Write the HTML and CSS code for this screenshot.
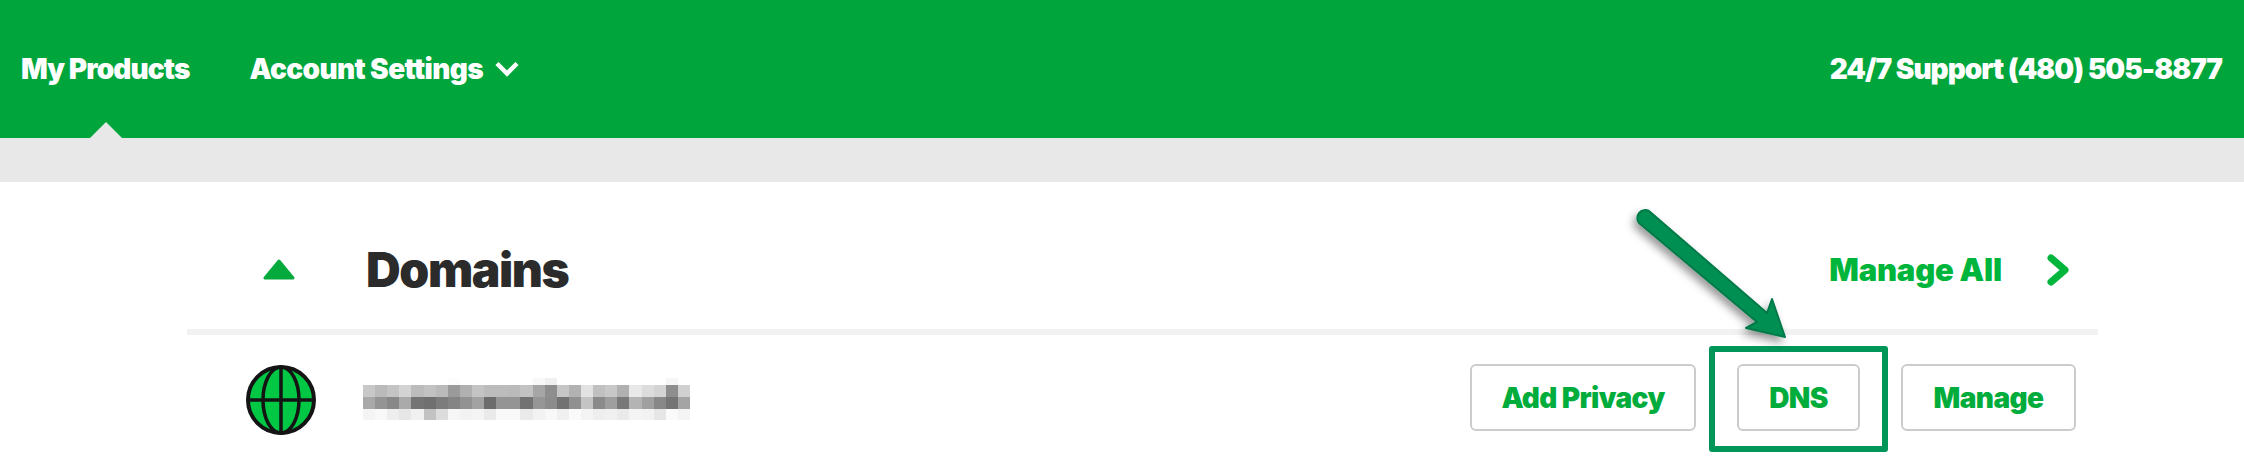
FILE: index.html
```html
<!DOCTYPE html>
<html>
<head>
    <link rel="stylesheet" href="styles.css">
    <title>My Products</title>
</head>
<body>
    <header class="top-bar">
        <nav class="top-nav">
            <a class="nav-link nav-active">My Products</a>
            <a class="nav-link nav-account">
                Account Settings
                <svg class="nav-chevron" width="24" height="16" viewBox="0 0 24 16"><path d="M2 2.5l10 10 10-10" fill="none" stroke="#fff" stroke-width="4.5"/></svg>
            </a>
        </nav>
        <div class="support">24/7 Support (480) 505-8877</div>
    </header>
    <div class="sub-band"></div>

    <section class="products">
        <div class="section-head">
            <svg class="collapse-icon" width="32" height="21" viewBox="0 0 32 21"><path d="M16 2L2 19h28z" fill="#05a93c" stroke="#05a93c" stroke-width="3" stroke-linejoin="round"/></svg>
            <h1 class="section-title">Domains</h1>
            <a class="manage-all">Manage All</a>
            <svg class="manage-chevron" width="23" height="32" viewBox="0 0 23 32"><path d="M4 4l14 12L4 28" fill="none" stroke="#00b53c" stroke-width="7" stroke-linecap="round" stroke-linejoin="round"/></svg>
        </div>

        <div class="domain-row">
            <svg class="globe" width="70" height="70" viewBox="0 0 70 70">
                <circle cx="35" cy="35" r="33" fill="#00c845" stroke="#141414" stroke-width="4"/>
                <ellipse cx="35" cy="35" rx="18" ry="33" fill="none" stroke="#141414" stroke-width="3.5"/>
                <path d="M35 2v66M2 35h66" stroke="#141414" stroke-width="3.5"/>
            </svg>

            <svg class="domain-blur" width="327" height="42" viewBox="0 0 27 42" preserveAspectRatio="none" shape-rendering="crispEdges">
                <rect x="7" y="0" width="1" height="7" fill="#fcfcfc"/>
                <rect x="14" y="0" width="1" height="7" fill="#f8f8f8"/>
                <rect x="15" y="0" width="1" height="7" fill="#f0f0f0"/>
                <rect x="25" y="0" width="1" height="7" fill="#f6f6f6"/>

                <rect x="0" y="7" width="1" height="12" fill="#c8c8c8"/>
                <rect x="1" y="7" width="1" height="12" fill="#bababa"/>
                <rect x="2" y="7" width="1" height="12" fill="#c4c4c4"/>
                <rect x="3" y="7" width="1" height="12" fill="#d4d4d4"/>
                <rect x="4" y="7" width="1" height="12" fill="#bcbcbc"/>
                <rect x="5" y="7" width="1" height="12" fill="#c2c2c2"/>
                <rect x="6" y="7" width="1" height="12" fill="#bababa"/>
                <rect x="7" y="7" width="1" height="12" fill="#9a9a9a"/>
                <rect x="8" y="7" width="1" height="12" fill="#b0b0b0"/>
                <rect x="9" y="7" width="1" height="12" fill="#c4c4c4"/>
                <rect x="10" y="7" width="1" height="12" fill="#bcbcbc"/>
                <rect x="11" y="7" width="1" height="12" fill="#bcbcbc"/>
                <rect x="12" y="7" width="1" height="12" fill="#bababa"/>
                <rect x="13" y="7" width="1" height="12" fill="#c2c2c2"/>
                <rect x="14" y="7" width="1" height="12" fill="#a6a6a6"/>
                <rect x="15" y="7" width="1" height="12" fill="#8e8e8e"/>
                <rect x="16" y="7" width="1" height="12" fill="#c6c6c6"/>
                <rect x="17" y="7" width="1" height="12" fill="#b2b2b2"/>
                <rect x="18" y="7" width="1" height="12" fill="#e2e2e2"/>
                <rect x="19" y="7" width="1" height="12" fill="#c0c0c0"/>
                <rect x="20" y="7" width="1" height="12" fill="#c8c8c8"/>
                <rect x="21" y="7" width="1" height="12" fill="#b0b0b0"/>
                <rect x="22" y="7" width="1" height="12" fill="#e8e8e8"/>
                <rect x="23" y="7" width="1" height="12" fill="#dcdcdc"/>
                <rect x="24" y="7" width="1" height="12" fill="#d4d4d4"/>
                <rect x="25" y="7" width="1" height="12" fill="#8e8e8e"/>
                <rect x="26" y="7" width="1" height="12" fill="#d0d0d0"/>

                <rect x="0" y="19" width="1" height="12" fill="#a8a8a8"/>
                <rect x="1" y="19" width="1" height="12" fill="#949494"/>
                <rect x="2" y="19" width="1" height="12" fill="#888888"/>
                <rect x="3" y="19" width="1" height="12" fill="#aaaaaa"/>
                <rect x="4" y="19" width="1" height="12" fill="#747474"/>
                <rect x="5" y="19" width="1" height="12" fill="#707070"/>
                <rect x="6" y="19" width="1" height="12" fill="#7c7c7c"/>
                <rect x="7" y="19" width="1" height="12" fill="#848484"/>
                <rect x="8" y="19" width="1" height="12" fill="#929292"/>
                <rect x="9" y="19" width="1" height="12" fill="#a2a2a2"/>
                <rect x="10" y="19" width="1" height="12" fill="#6c6c6c"/>
                <rect x="11" y="19" width="1" height="12" fill="#949494"/>
                <rect x="12" y="19" width="1" height="12" fill="#949494"/>
                <rect x="13" y="19" width="1" height="12" fill="#727272"/>
                <rect x="14" y="19" width="1" height="12" fill="#969696"/>
                <rect x="15" y="19" width="1" height="12" fill="#8c8c8c"/>
                <rect x="16" y="19" width="1" height="12" fill="#727272"/>
                <rect x="17" y="19" width="1" height="12" fill="#909090"/>
                <rect x="18" y="19" width="1" height="12" fill="#c4c4c4"/>
                <rect x="19" y="19" width="1" height="12" fill="#8a8a8a"/>
                <rect x="20" y="19" width="1" height="12" fill="#9e9e9e"/>
                <rect x="21" y="19" width="1" height="12" fill="#787878"/>
                <rect x="22" y="19" width="1" height="12" fill="#b4b4b4"/>
                <rect x="23" y="19" width="1" height="12" fill="#a0a0a0"/>
                <rect x="24" y="19" width="1" height="12" fill="#888888"/>
                <rect x="25" y="19" width="1" height="12" fill="#747474"/>
                <rect x="26" y="19" width="1" height="12" fill="#a4a4a4"/>

                <rect x="0" y="31" width="1" height="11" fill="#f4f4f4"/>
                <rect x="1" y="31" width="1" height="11" fill="#f8f8f8"/>
                <rect x="2" y="31" width="1" height="11" fill="#eeeeee"/>
                <rect x="3" y="31" width="1" height="11" fill="#e6e6e6"/>
                <rect x="4" y="31" width="1" height="11" fill="#f0f0f0"/>
                <rect x="5" y="31" width="1" height="11" fill="#c2c2c2"/>
                <rect x="6" y="31" width="1" height="11" fill="#dcdcdc"/>
                <rect x="7" y="31" width="1" height="11" fill="#f6f6f6"/>
                <rect x="8" y="31" width="1" height="11" fill="#f2f2f2"/>
                <rect x="9" y="31" width="1" height="11" fill="#f4f4f4"/>
                <rect x="10" y="31" width="1" height="11" fill="#eaeaea"/>
                <rect x="11" y="31" width="1" height="11" fill="#f8f8f8"/>
                <rect x="12" y="31" width="1" height="11" fill="#f8f8f8"/>
                <rect x="13" y="31" width="1" height="11" fill="#eaeaea"/>
                <rect x="14" y="31" width="1" height="11" fill="#f2f2f2"/>
                <rect x="15" y="31" width="1" height="11" fill="#f8f8f8"/>
                <rect x="16" y="31" width="1" height="11" fill="#f0f0f0"/>
                <rect x="17" y="31" width="1" height="11" fill="#fafafa"/>
                <rect x="18" y="31" width="1" height="11" fill="#f4f4f4"/>
                <rect x="19" y="31" width="1" height="11" fill="#eeeeee"/>
                <rect x="20" y="31" width="1" height="11" fill="#f0f0f0"/>
                <rect x="21" y="31" width="1" height="11" fill="#eaeaea"/>
                <rect x="22" y="31" width="1" height="11" fill="#f4f4f4"/>
                <rect x="23" y="31" width="1" height="11" fill="#f2f2f2"/>
                <rect x="24" y="31" width="1" height="11" fill="#e6e6e6"/>
                <rect x="25" y="31" width="1" height="11" fill="#fafafa"/>
                <rect x="26" y="31" width="1" height="11" fill="#f4f4f4"/>
            </svg>

            <div class="domain-actions">
                <a class="btn btn-privacy">Add Privacy</a>
                <a class="btn btn-dns">DNS<span class="dns-highlight"></span></a>
                <a class="btn btn-manage">Manage</a>
            </div>
        </div>
    </section>

    <!-- annotation arrow drawn over the page -->
    <svg class="callout-arrow" width="190" height="170" viewBox="0 0 190 170">
        <defs>
            <filter id="arrowShadow" x="-20%" y="-20%" width="150%" height="150%">
                <feDropShadow dx="-3" dy="5" stdDeviation="4" flood-color="#000" flood-opacity="0.4"/>
            </filter>
        </defs>
        <path d="M19 28A8 8 0 0 1 29 16L147 118L152 104L165 142L126 133L137 127Z" fill="#008f52" stroke="#067a48" stroke-width="2" stroke-linejoin="round" filter="url(#arrowShadow)"/>
    </svg>
</body>
</html>
```

FILE: styles.css
```css
html {
    background: #fff;
}

body {
    margin: 0;
    height: 466px;
    overflow: hidden;
    position: relative;
    font-family: Inter, "Open Sans", sans-serif;
    font-weight: 900;
}

.top-bar {
    height: 138px;
    box-sizing: border-box;
    padding: 0 22px 0 21px;
    display: flex;
    align-items: center;
    justify-content: space-between;
    background: #00a63b;
    color: #fff;
    font-size: 28px;
    letter-spacing: -0.6px;
}

.top-nav {
    align-self: stretch;
    display: flex;
    gap: 60px;
}

.nav-link {
    color: #fff;
    display: flex;
    align-items: center;
}

.nav-active {
    position: relative;
    letter-spacing: -0.9px;
}

/* little notch pointing at the current page */
.nav-active::after {
    content: "";
    position: absolute;
    left: 69px;
    bottom: 0;
    border-left: 16px solid transparent;
    border-right: 16px solid transparent;
    border-bottom: 16px solid #e8e8e8;
}

.nav-chevron {
    margin-left: 12px;
}

.support {
    letter-spacing: -1px;
}

.sub-band {
    height: 44px;
    background: #e8e8e8;
}

.products {
    margin-left: 187px;
    width: 1911px;
}

.section-head {
    height: 153px;
    box-sizing: border-box;
    padding: 28px 28px 0 76px;
    display: flex;
    align-items: center;
    border-bottom: 6px solid #f2f2f2;
}

.section-title {
    margin: 0 0 0 71px;
    font-size: 48px;
    font-weight: 900;
    color: #2b2b2b;
    letter-spacing: -1.4px;
}

.manage-all {
    margin-left: auto;
    font-size: 31px;
    color: #00b53c;
    letter-spacing: -0.2px;
}

.manage-chevron {
    margin-left: 45px;
}

.domain-row {
    display: flex;
    align-items: flex-start;
    padding: 29px 22px 0 59px;
}

.globe {
    margin-top: 1px;
}

.domain-blur {
    margin: 14px 0 0 47px;
}

.domain-actions {
    margin-left: auto;
    display: flex;
    gap: 41px;
}

.btn {
    height: 67px;
    box-sizing: border-box;
    display: flex;
    align-items: center;
    justify-content: center;
    border: 2px solid #ccc;
    border-radius: 6px;
    color: #00ac3c;
    font-size: 28px;
    letter-spacing: -0.6px;
}

.btn-privacy {
    width: 226px;
}

.btn-dns {
    width: 123px;
    position: relative;
}

.btn-manage {
    width: 175px;
}

.dns-highlight {
    position: absolute;
    top: -20px;
    right: -30px;
    bottom: -23px;
    left: -30px;
    border: 6px solid #00965a;
    border-radius: 3px;
}

.callout-arrow {
    position: absolute;
    left: 1620px;
    top: 195px;
}
```
